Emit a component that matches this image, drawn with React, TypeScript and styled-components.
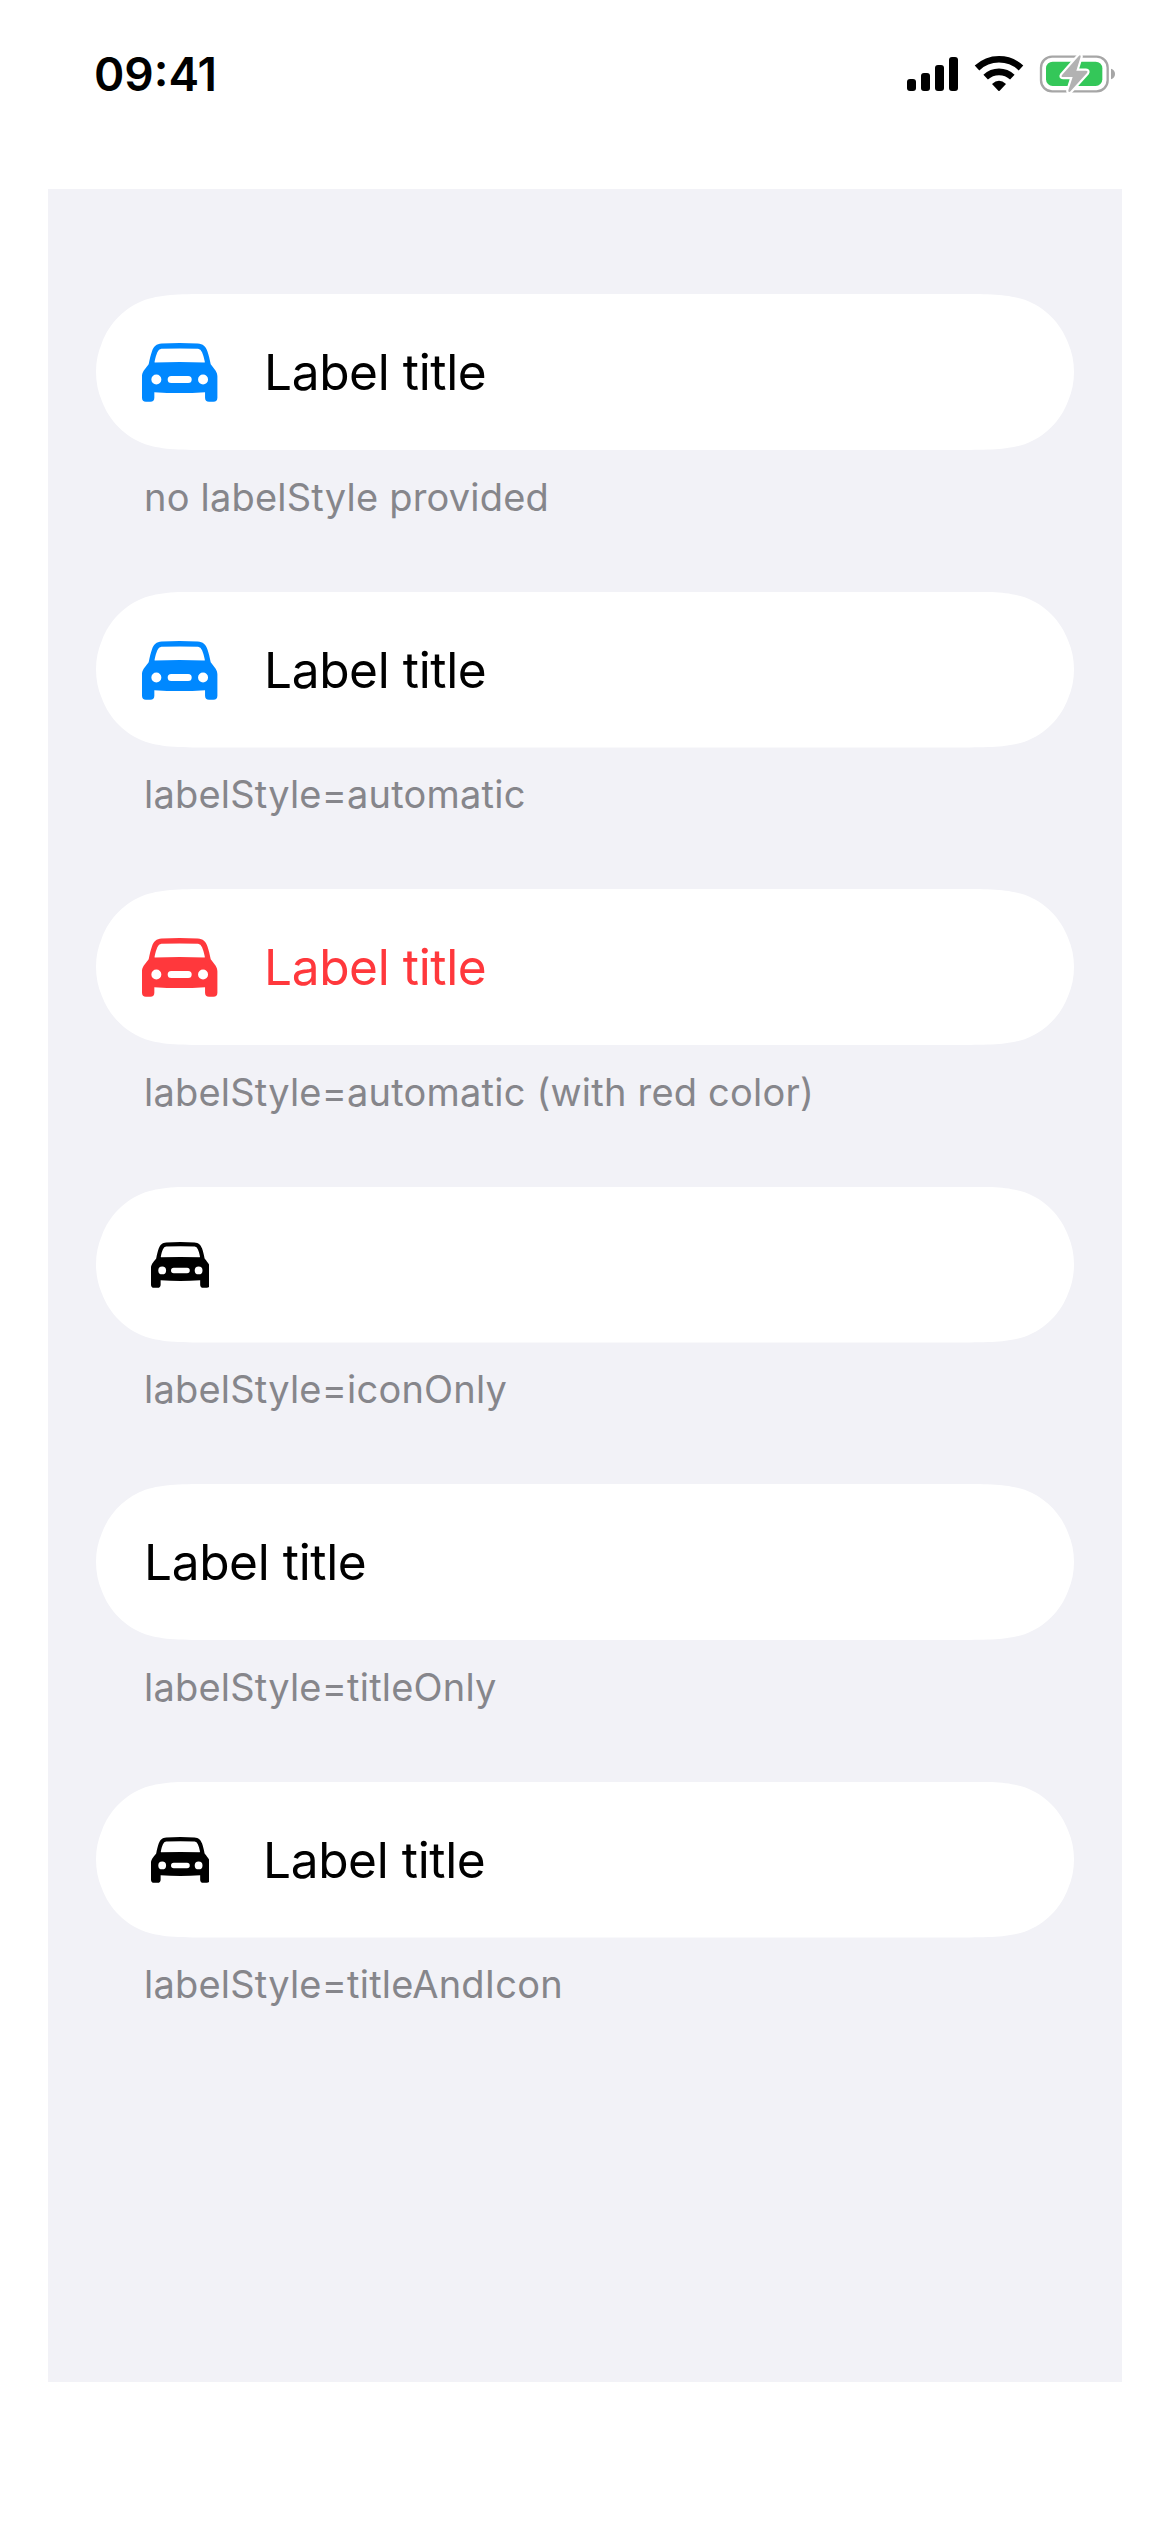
import React from 'react';
import styled, { createGlobalStyle } from 'styled-components';

const Global = createGlobalStyle`
  *, *::before, *::after { box-sizing: border-box; }
  body { margin: 0; background: #ffffff; }
`;

const Screen = styled.main`
  display: flex;
  flex-direction: column;
  width: 1170px;
  height: 2532px;
  padding: 0 48px 150px;
  background: #ffffff;
  color: #000000;
  font-family: Inter, "Liberation Sans", sans-serif;
`;

const StatusBar = styled.header`
  display: flex;
  justify-content: space-between;
  align-items: flex-start;
  flex: none;
  height: 189px;
  padding: 46px 5px 0 46px;
`;

const Time = styled.time`
  font-size: 46px;
  line-height: 56px;
  font-weight: 600;
  letter-spacing: 0;
`;

const Indicators = styled.div`
  display: flex;
  height: 56px;
  margin-top: 1px;

  svg { display: block; }
`;

const Form = styled.section`
  display: flex;
  flex-direction: column;
  flex: 1;
  gap: 63.5px;
  padding: 105px 48px 0;
  background: #f2f2f7;
`;

const Group = styled.section`
  display: flex;
  flex-direction: column;
  flex: none;
  height: 234px;
`;

const Row = styled.div<{ $tint: string; $compact: boolean }>`
  display: flex;
  align-items: center;
  flex: none;
  gap: ${({ $compact }) => ($compact ? 47 : 48)}px;
  height: 156px;
  padding: 0 48px;
  background: #ffffff;
  color: ${({ $tint }) => $tint};
  clip-path: path("M119.2 0 C84.9 0 67.7 0 49.3 5.8 C29.1 13.2 13.2 29.1 5.8 49.3 C2 58 0 67.7 0 78 C0 88.3 2 98 5.8 106.7 C13.2 126.9 29.1 142.8 49.3 150.2 C67.7 156 84.9 156 119.2 156 L858.8 156 C893.1 156 910.3 156 928.7 150.2 C948.9 142.8 964.8 126.9 972.2 106.7 C976 98 978 88.3 978 78 C978 67.7 976 58 972.2 49.3 C964.8 29.1 948.9 13.2 928.7 5.8 C910.3 0 893.1 0 858.8 0 Z");
`;

const IconSlot = styled.span<{ $color: string }>`
  display: flex;
  align-items: center;
  justify-content: center;
  flex: none;
  width: 72px;
  color: ${({ $color }) => $color};
`;

const CarSvg = styled.svg<{ $large: boolean }>`
  display: block;
  flex: none;
  width: ${({ $large }) => ($large ? 75.4 : 58.8)}px;
  height: ${({ $large }) => ($large ? 59 : 46)}px;
  margin-top: 1px;
`;

const Title = styled.span`
  font-size: 49.6px;
  line-height: 66px;
  letter-spacing: -0.38px;
  white-space: nowrap;
`;

const Footer = styled.p`
  margin: 22.5px 0 0;
  padding-left: 48px;
  font-size: 38px;
  line-height: 48px;
  letter-spacing: 0.21px;
  white-space: nowrap;
  color: #86868b;
`;

function Car({ large }: { large: boolean }) {
  return (
    <CarSvg $large={large} viewBox="36 39.5 226 177" preserveAspectRatio="none">
      <path
        fill="currentColor"
        fillRule="evenodd"
        d="M36 140 C36 126 43 120 56 103 C59 88 62 75 66 64 C71 50 79 42 95 41 Q149 38 203 41 C219 42 227 50 232 64 C236 75 239 88 242 103 C255 120 262 126 262 140 V204 Q262 216 250 216 H237 Q225 216 225 204 V187 Q149 192 73 187 V204 Q73 216 61 216 H48 Q36 216 36 204 Z
        M75 98 Q149 95.5 223 98 Q225 98 224 94 C222 83 219 74 216 67 Q212 58 204 57 Q149 54.5 94 57 Q86 58 82 67 C79 74 76 83 74 94 Q73 98 75 98 Z
        M64 149 a15 15 0 1 0 30 0 a15 15 0 1 0 -30 0 Z
        M204 149 a15 15 0 1 0 30 0 a15 15 0 1 0 -30 0 Z
        M123.5 138.5 H174.5 a10.5 10.5 0 0 1 0 21 H123.5 a10.5 10.5 0 0 1 0 -21 Z"
      />
    </CarSvg>
  );
}

function StatusIcons() {
  return (
    <Indicators>
      <svg width="56" height="56" viewBox="0 0 56 56">
        <rect x="0" y="32" width="9" height="12" rx="3" />
        <rect x="14" y="26" width="9" height="18" rx="3" />
        <rect x="28" y="18" width="9" height="26" rx="3" />
        <rect x="42" y="10" width="9" height="34" rx="3" />
      </svg>
      <svg width="70" height="56" viewBox="219 21 210 168">
        <g fill="none" stroke="#000" strokeWidth="20">
          <path d="M261 84 A96 96 0 0 1 393 84" />
          <path d="M287 111.500 A59 59 0 0 1 367 111.500" />
        </g>
        <path d="M306 132 Q327 113 348 132 L329 152 Q327 154 325 152 Z" />
      </svg>
      <svg width="84" height="56" viewBox="429 21 252 168">
        <rect x="453" y="50" width="200" height="104" rx="33" fill="none" stroke="#a6a6a6" strokeWidth="7" />
        <path d="M663 86 Q675 90 675 102 Q675 114 663 118 Z" fill="#a6a6a6" />
        <rect x="468" y="65" width="169" height="73" rx="20" fill="#34c759" />
        <path
          d="M567 47 L516 105 Q512 111 519 111 H548 L535 151 Q534 158 540 155 L591 99 Q595 92 588 92 H559 L572 50 Q572 44 567 47 Z"
          fill="#b2b2b2"
          stroke="#ffffff"
          strokeWidth="13"
          strokeLinejoin="round"
          paintOrder="stroke"
        />
      </svg>
    </Indicators>
  );
}

interface LabelExample {
  footer: string;
  title?: boolean;
  icon?: 'large' | 'small';
  iconColor?: string;
  tint?: string;
}

const examples: LabelExample[] = [
  { footer: 'no labelStyle provided', title: true, icon: 'large', iconColor: '#0088ff' },
  { footer: 'labelStyle=automatic', title: true, icon: 'large', iconColor: '#0088ff' },
  { footer: 'labelStyle=automatic (with red color)', title: true, icon: 'large', iconColor: '#ff383c', tint: '#ff383c' },
  { footer: 'labelStyle=iconOnly', icon: 'small' },
  { footer: 'labelStyle=titleOnly', title: true },
  { footer: 'labelStyle=titleAndIcon', title: true, icon: 'small' },
];

export default function App() {
  return (
    <>
      <Global />
      <Screen>
        <StatusBar>
          <Time>09:41</Time>
          <StatusIcons />
        </StatusBar>
        <Form>
          {examples.map(({ footer, title, icon, iconColor = '#000000', tint = '#000000' }) => (
            <Group key={footer}>
              <Row $tint={tint} $compact={icon === 'small'}>
                {icon && (
                  <IconSlot $color={iconColor}>
                    <Car large={icon === 'large'} />
                  </IconSlot>
                )}
                {title && <Title>Label title</Title>}
              </Row>
              <Footer>{footer}</Footer>
            </Group>
          ))}
        </Form>
      </Screen>
    </>
  );
}
